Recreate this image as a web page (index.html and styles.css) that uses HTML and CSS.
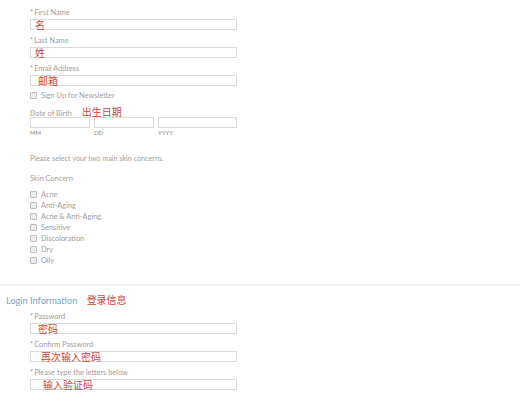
FILE: index.html
```html
<!DOCTYPE html>
<html lang="zh-CN">
<head>
    <meta charset="UTF-8">
    <title>Register</title>
    <link rel="stylesheet" href="styles.css">
</head>
<body>
    <div class="form-block">
        <div class="field">
            <div class="label"><span class="req">*</span>First Name</div>
            <div class="input"><span class="hint pad-s">名</span></div>
        </div>
        <div class="field">
            <div class="label"><span class="req">*</span>Last Name</div>
            <div class="input"><span class="hint pad-s">姓</span></div>
        </div>
        <div class="field">
            <div class="label"><span class="req">*</span>Email Address</div>
            <div class="input"><span class="hint pad-m">邮箱</span></div>
        </div>

        <label class="check newsletter"><span class="box"></span>Sign Up for Newsletter</label>

        <div class="dob">
            <div class="label">Date of Birth <span class="hint dob-hint">出生日期</span></div>
            <div class="dob-row">
                <div class="dob-col short">
                    <div class="input"></div>
                    <div class="small">MM</div>
                </div>
                <div class="dob-col short">
                    <div class="input"></div>
                    <div class="small">DD</div>
                </div>
                <div class="dob-col long">
                    <div class="input"></div>
                    <div class="small">YYYY</div>
                </div>
            </div>
        </div>

        <p class="note">Please select your two main skin concerns.</p>

        <div class="label concern-title">Skin Concern</div>
        <div class="concerns">
            <label class="check"><span class="box"></span>Acne</label>
            <label class="check"><span class="box"></span>Anti-Aging</label>
            <label class="check"><span class="box"></span>Acne &amp; Anti-Aging</label>
            <label class="check"><span class="box"></span>Sensitive</label>
            <label class="check"><span class="box"></span>Discoloration</label>
            <label class="check"><span class="box"></span>Dry</label>
            <label class="check"><span class="box"></span>Oily</label>
        </div>
    </div>

    <hr class="divider">

    <h2 class="section-title">Login Information <span class="hint title-hint">登录信息</span></h2>

    <div class="form-block login">
        <div class="field">
            <div class="label"><span class="req">*</span>Password</div>
            <div class="input"><span class="hint pad-m">密码</span></div>
        </div>
        <div class="field">
            <div class="label"><span class="req">*</span>Confirm Password</div>
            <div class="input"><span class="hint pad-l">再次输入密码</span></div>
        </div>
        <div class="field">
            <div class="label"><span class="req">*</span>Please type the letters below</div>
            <div class="input"><span class="hint pad-xl">输入验证码</span></div>
        </div>
    </div>
</body>
</html>
```

FILE: styles.css
```css
body {
    margin: 0;
    background: #fff;
    font-family: 'Lato', 'Liberation Sans', sans-serif;
    color: #9a9a9a;
}

.form-block {
    padding: 8px 0 0 30px;
    width: 207px;
}

.field {
    margin-bottom: 6px;
}

.label {
    font-size: 7.4px;
    line-height: 10px;
    height: 10px;
    margin-bottom: 1px;
    color: #a0a0a0;
    white-space: nowrap;
}

.req {
    margin-right: 1px;
}

.input {
    box-sizing: border-box;
    height: 11px;
    border: 1px solid #dadada;
    background: #fff;
    display: flex;
    align-items: center;
}

.hint {
    font-family: 'Noto Sans CJK SC', sans-serif;
    font-size: 10px;
    line-height: 10px;
    color: #c8463c;
}

.pad-s { padding-left: 4px; }
.pad-m { padding-left: 7px; }
.pad-l { padding-left: 10px; }
.pad-xl { padding-left: 12px; }

.check {
    display: flex;
    align-items: center;
    font-size: 7.4px;
    line-height: 11px;
    height: 11px;
    color: #a0a0a0;
}

.box {
    box-sizing: border-box;
    width: 7px;
    height: 7px;
    border: 1px solid #c0c0c0;
    border-radius: 1px;
    background: #ececec;
    margin-right: 4px;
}

.newsletter {
    margin-top: -2px;
    margin-bottom: 6px;
}

.dob .label {
    margin-bottom: 0;
}

.dob-hint {
    margin-left: 8px;
}

.dob-row {
    display: flex;
    gap: 4px;
}

.dob-col.short {
    width: 60px;
}

.dob-col.long {
    flex: 1;
}

.small {
    font-size: 6px;
    line-height: 10px;
    color: #8a8a8a;
}

.note {
    margin: 16px 0 0;
    font-size: 7.2px;
    line-height: 10px;
    color: #a0a0a0;
}

.concern-title {
    margin-top: 10px;
    margin-bottom: 5px;
}

.divider {
    border: 0;
    height: 2px;
    background: #f2f2f2;
    margin: 18px 3px 0 0;
}

.section-title {
    margin: 9px 0 0 6px;
    font-size: 9.2px;
    line-height: 12px;
    font-weight: normal;
    color: #7aa5c2;
}

.title-hint {
    margin-left: 7px;
}

.form-block.login {
    padding-top: 5px;
}
```
